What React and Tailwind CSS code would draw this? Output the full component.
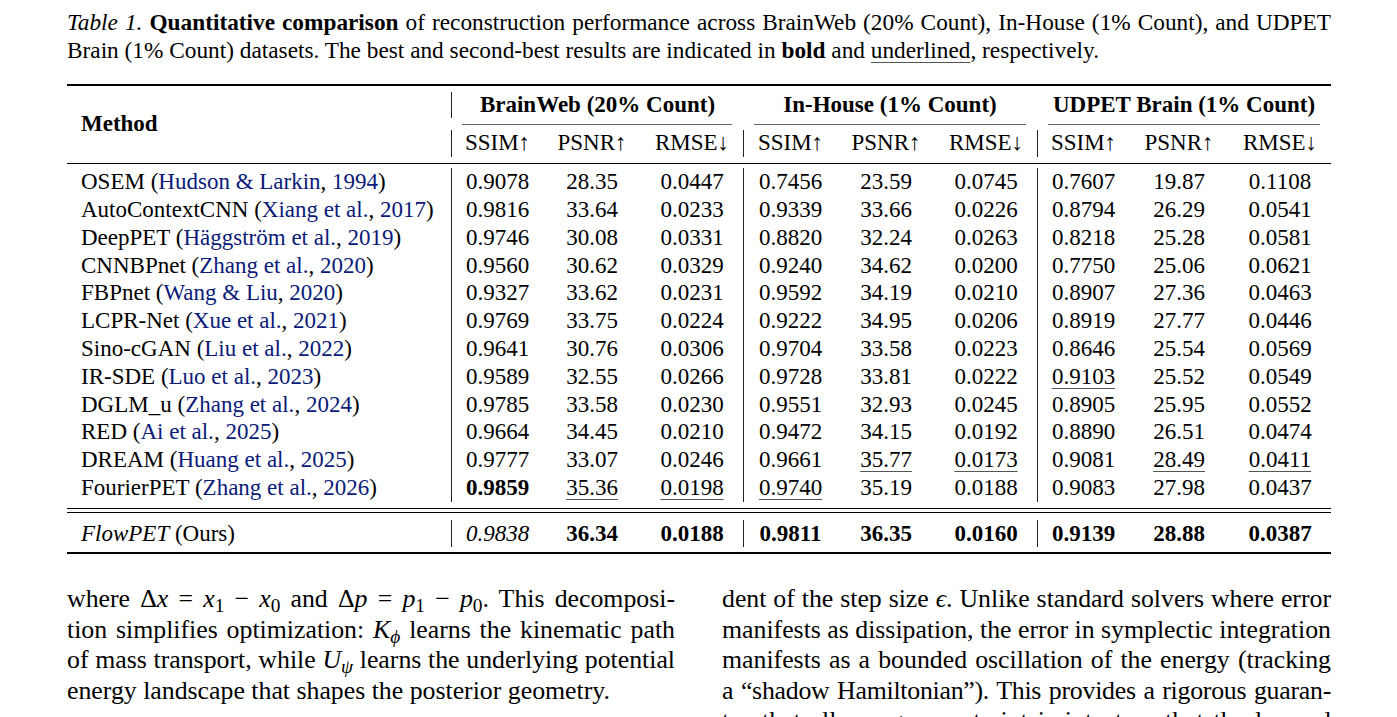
import React from "react";

const COLS =
  "grid grid-cols-[384px_92px_98px_102px_94px_98px_102px_92px_100px_102px]";

const rows = [
  ["OSEM", "Hudson & Larkin", "1994", ["0.9078", "28.35", "0.0447", "0.7456", "23.59", "0.0745", "0.7607", "19.87", "0.1108"]],
  ["AutoContextCNN", "Xiang et al.", "2017", ["0.9816", "33.64", "0.0233", "0.9339", "33.66", "0.0226", "0.8794", "26.29", "0.0541"]],
  ["DeepPET", "Häggström et al.", "2019", ["0.9746", "30.08", "0.0331", "0.8820", "32.24", "0.0263", "0.8218", "25.28", "0.0581"]],
  ["CNNBPnet", "Zhang et al.", "2020", ["0.9560", "30.62", "0.0329", "0.9240", "34.62", "0.0200", "0.7750", "25.06", "0.0621"]],
  ["FBPnet", "Wang & Liu", "2020", ["0.9327", "33.62", "0.0231", "0.9592", "34.19", "0.0210", "0.8907", "27.36", "0.0463"]],
  ["LCPR-Net", "Xue et al.", "2021", ["0.9769", "33.75", "0.0224", "0.9222", "34.95", "0.0206", "0.8919", "27.77", "0.0446"]],
  ["Sino-cGAN", "Liu et al.", "2022", ["0.9641", "30.76", "0.0306", "0.9704", "33.58", "0.0223", "0.8646", "25.54", "0.0569"]],
  ["IR-SDE", "Luo et al.", "2023", ["0.9589", "32.55", "0.0266", "0.9728", "33.81", "0.0222", "_0.9103", "25.52", "0.0549"]],
  ["DGLM_u", "Zhang et al.", "2024", ["0.9785", "33.58", "0.0230", "0.9551", "32.93", "0.0245", "0.8905", "25.95", "0.0552"]],
  ["RED", "Ai et al.", "2025", ["0.9664", "34.45", "0.0210", "0.9472", "34.15", "0.0192", "0.8890", "26.51", "0.0474"]],
  ["DREAM", "Huang et al.", "2025", ["0.9777", "33.07", "0.0246", "0.9661", "_35.77", "_0.0173", "0.9081", "_28.49", "_0.0411"]],
  ["FourierPET", "Zhang et al.", "2026", ["*0.9859", "_35.36", "_0.0198", "_0.9740", "35.19", "0.0188", "0.9083", "27.98", "0.0437"]],
];

const ours = ["/0.9838", "*36.34", "*0.0188", "*0.9811", "*36.35", "*0.0160", "*0.9139", "*28.88", "*0.0387"];

function Val({ v }) {
  const m = v[0];
  if (m === "*") return <span className="font-bold">{v.slice(1)}</span>;
  if (m === "_")
    return (
      <span className="underline decoration-1 underline-offset-[4px] decoration-[#555]">
        {v.slice(1)}
      </span>
    );
  if (m === "/") return <span className="italic">{v.slice(1)}</span>;
  return <span>{v}</span>;
}

function ValueCells({ vals }) {
  return vals.map((v, i) => (
    <div
      key={i}
      className={
        "flex items-center justify-center " +
        (i % 3 === 0 ? "border-l border-[#222]" : "")
      }
    >
      <Val v={v} />
    </div>
  ));
}

const cite = "text-[#0a1a78]";
const J = "whitespace-nowrap text-justify [text-align-last:justify]";

export default function App() {
  return (
    <div className="w-[1397px] h-[717px] overflow-hidden bg-white text-black font-['Liberation_Serif',serif]">
      <div className="ml-[67px] w-[1264px]">
        {/* Caption */}
        <div className="pt-[8px] text-[23.3px] leading-[28px]">
          <div className={J}>
            <span className="italic">Table 1.</span>{" "}
            <span className="font-bold">Quantitative comparison</span> of reconstruction
            performance across BrainWeb (20% Count), In-House (1% Count), and UDPET
          </div>
          <div className="whitespace-nowrap">
            Brain (1% Count) datasets. The best and second-best results are indicated in{" "}
            <span className="font-bold">bold</span> and{" "}
            <span className="underline decoration-1 underline-offset-[4px] decoration-[#555]">
              underlined
            </span>
            , respectively.
          </div>
        </div>

        {/* Table */}
        <div className="mt-[20px] text-[23px]">
          <div className="h-[2px] bg-black" />
          {/* Header */}
          <div className={COLS + " grid-rows-[32px_12px_27px]"}>
            <div className="row-span-3 flex items-center pl-[14px] pt-[5px] font-bold leading-[28px]">
              Method
            </div>
            <div className="col-span-3 flex items-end">
              <div className="h-[26px] w-full border-l border-[#222] flex items-center justify-center font-bold">
                BrainWeb (20% Count)
              </div>
            </div>
            <div className="col-span-3 flex items-end">
              <div className="h-[26px] w-full flex items-center justify-center font-bold">
                In-House (1% Count)
              </div>
            </div>
            <div className="col-span-3 flex items-end">
              <div className="h-[26px] w-full flex items-center justify-center font-bold">
                UDPET Brain (1% Count)
              </div>
            </div>
            {[0, 1, 2].map((g) => (
              <div key={g} className="col-span-3 flex items-center px-[11px]">
                <div className="h-px w-full bg-[#666]" />
              </div>
            ))}
            {[0, 1, 2].map((g) => (
              <React.Fragment key={g}>
                <div className="border-l border-[#222] flex items-center justify-center">
                  SSIM↑
                </div>
                <div className="flex items-center justify-center">PSNR↑</div>
                <div className="flex items-center justify-center">RMSE↓</div>
              </React.Fragment>
            ))}
          </div>
          <div className="mt-[6px] h-[1.3px] bg-black" />
          {/* Body rows */}
          <div className="pt-[4px]">
            {rows.map(([name, auth, year, vals]) => (
              <div key={name + year} className={COLS + " h-[27.8px] leading-[27.8px]"}>
                <div className="pl-[14px] whitespace-nowrap">
                  {name} (<span className={cite}>{auth}</span>,{" "}
                  <span className={cite}>{year}</span>)
                </div>
                <ValueCells vals={vals} />
              </div>
            ))}
          </div>
          <div className="mt-[6.5px] h-px bg-black" />
          <div className="mt-[3px] h-px bg-black" />
          <div className={COLS + " mt-[7px] h-[27px] leading-[27px]"}>
            <div className="pl-[14px]">
              <span className="italic">FlowPET</span> (Ours)
            </div>
            <ValueCells vals={ours} />
          </div>
          <div className="mt-[5px] h-[2px] bg-black" />
        </div>

        {/* Body text */}
        <div className="mt-[30px] grid grid-cols-[608px_609px] gap-x-[47px] text-[25.8px] leading-[30.5px]">
          <div>
            <div className={J}>
              where Δ<i>x</i> = <i>x</i>
              <sub>1</sub> − <i>x</i>
              <sub>0</sub> and Δ<i>p</i> = <i>p</i>
              <sub>1</sub> − <i>p</i>
              <sub>0</sub>. This decomposi-
            </div>
            <div className={J}>
              tion simplifies optimization: <i>K</i>
              <sub>
                <i>ϕ</i>
              </sub>{" "}
              learns the kinematic path
            </div>
            <div className={J}>
              of mass transport, while <i>U</i>
              <sub>
                <i>ψ</i>
              </sub>{" "}
              learns the underlying potential
            </div>
            <div className="whitespace-nowrap">
              energy landscape that shapes the posterior geometry.
            </div>
          </div>
          <div>
            <div className={J}>
              dent of the step size <i>ϵ</i>. Unlike standard solvers where error
            </div>
            <div className={J}>manifests as dissipation, the error in symplectic integration</div>
            <div className={J}>manifests as a bounded oscillation of the energy (tracking</div>
            <div className={J + " tracking-[-0.25px]"}>
              a “shadow Hamiltonian”). This provides a rigorous guaran-
            </div>
            <div className={J}>tee that all energy constraint is intact so that the learned</div>
          </div>
        </div>
      </div>
    </div>
  );
}
